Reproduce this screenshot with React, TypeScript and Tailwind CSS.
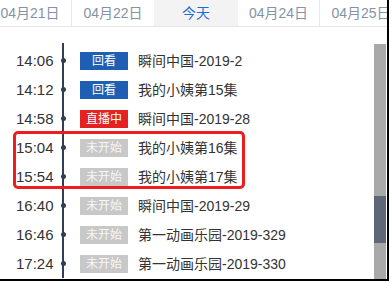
import React from "react";

type Status = "replay" | "live" | "soon";
const rows: { time: string; status: Status; title: string }[] = [
  { time: "14:06", status: "replay", title: "瞬间中国-2019-2" },
  { time: "14:12", status: "replay", title: "我的小姨第15集" },
  { time: "14:58", status: "live", title: "瞬间中国-2019-28" },
  { time: "15:04", status: "soon", title: "我的小姨第16集" },
  { time: "15:54", status: "soon", title: "我的小姨第17集" },
  { time: "16:40", status: "soon", title: "瞬间中国-2019-29" },
  { time: "16:46", status: "soon", title: "第一动画乐园-2019-329" },
  { time: "17:24", status: "soon", title: "第一动画乐园-2019-330" },
];

function Badge({ status }: { status: Status }) {
  if (status === "replay")
    return (
      <div className="w-[48px] h-[18px] flex items-center justify-center bg-[#1e5fb3] text-white text-[12px] leading-none">
        回看
      </div>
    );
  if (status === "live")
    return (
      <div className="w-[48px] h-[18px] flex items-center justify-center bg-[#e42222] text-white text-[12px] leading-none">
        直播中
      </div>
    );
  return (
    <div className="w-[48px] h-[18px] flex items-center justify-center bg-[#c8c8c8] text-[#f7f7f7] text-[12px] leading-none">
      未开始
    </div>
  );
}

export default function App() {
  const font = { fontFamily: '"Liberation Sans", "Noto Sans CJK SC", sans-serif' };
  return (
    <div className="w-[392px] h-[283px] bg-white" style={font}>
      <div className="w-[389px] h-[281px] flex flex-col border-r-2 border-b-2 border-black overflow-hidden">
        <div className="h-[27px] shrink-0 flex border-b border-[#e6e6e6] overflow-hidden text-[14px] text-[#8592a6]">
          <div className="ml-[-11px] w-[83px] shrink-0 flex items-center justify-center border-r border-[#e8e8e8]">04月21日</div>
          <div className="w-[82px] shrink-0 flex items-center justify-center">04月22日</div>
          <div className="w-[84px] shrink-0 flex items-center justify-center bg-[#f3f3f3] text-[#1f6ad4]">今天</div>
          <div className="w-[82px] shrink-0 flex items-center justify-center border-r border-[#e8e8e8]">04月24日</div>
          <div className="w-[82px] shrink-0 flex items-center justify-center">04月25日</div>
        </div>
        <div className="flex-1 flex min-h-0">
          <div className="flex-1 relative">
            <div className="h-[19px] pl-[16px] flex">
              <div className="w-[41px]" />
              <div className="w-[12px] relative">
                <div className="absolute left-[5px] top-[16px] bottom-0 w-[2px] bg-[#2f3e52]" />
              </div>
            </div>
            {rows.map((r) => (
              <div key={r.time} className="h-[29px] pl-[16px] flex items-center">
                <div className="w-[41px] text-[15px] text-[#333] leading-none">{r.time}</div>
                <div className="w-[12px] self-stretch relative">
                  <div className="absolute left-[5px] top-0 bottom-0 w-[2px] bg-[#2f3e52]" />
                  <div className="absolute left-[3.5px] top-[12px] w-[5px] h-[5px] rounded-full bg-[#2f3e52]" />
                </div>
                <div className="ml-[11px]">
                  <Badge status={r.status} />
                </div>
                <div className="ml-[10px] text-[14px] text-[#333] leading-none whitespace-nowrap">{r.title}</div>
              </div>
            ))}
            <div className="absolute left-[13px] top-[104px] w-[232px] h-[58px] border-[3px] border-[#ee1c1c] rounded-[5px]" />
          </div>
          <div className="w-[12px] mr-[1px] mt-[17px] bg-[#a9a9a9] flex flex-col">
            <div className="h-[152px]" />
            <div className="h-[47px] bg-[#5e6777]" />
          </div>
        </div>
      </div>
    </div>
  );
}
